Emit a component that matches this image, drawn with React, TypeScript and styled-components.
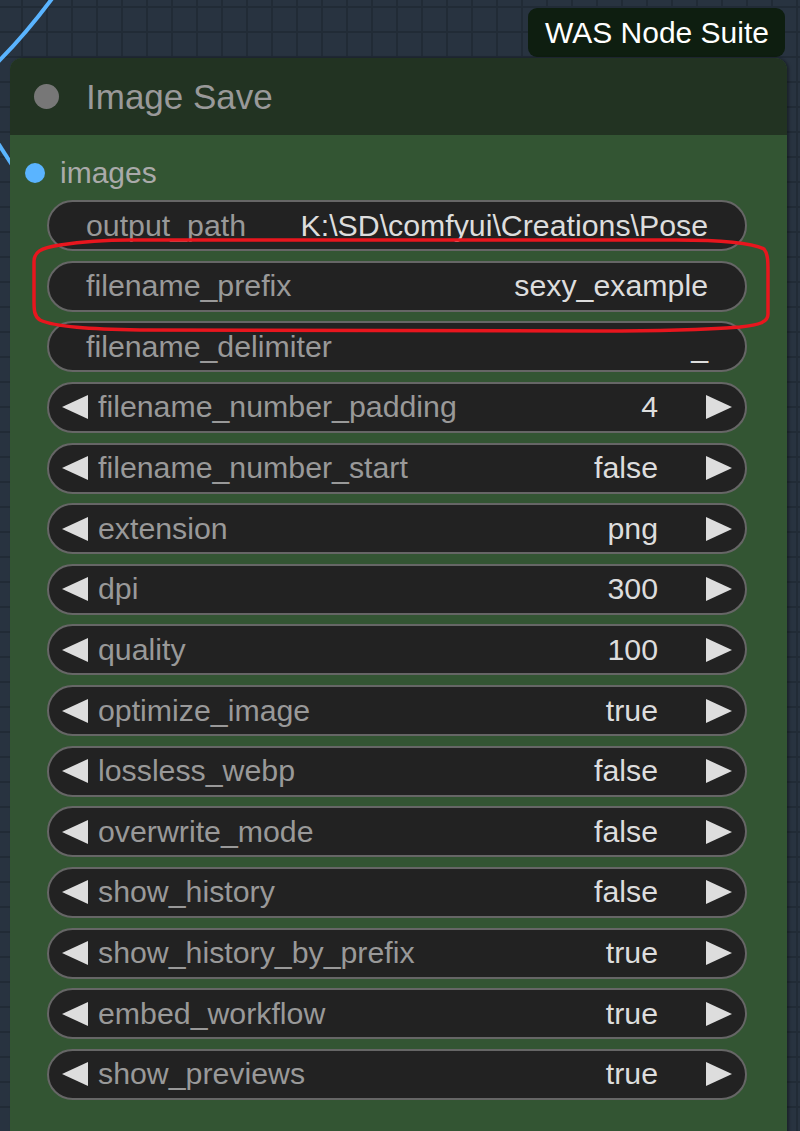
import React from 'react';
import styled, { createGlobalStyle } from 'styled-components';

const GlobalStyle = createGlobalStyle`
  html, body {
    margin: 0;
    padding: 0;
    background: #283340;
  }
  * {
    box-sizing: border-box;
  }
`;

interface IWidget {
  label: string;
  value: string;
  kind: 'text' | 'combo';
}

const widgets: IWidget[] = [
  { label: 'output_path', value: 'K:\\SD\\comfyui\\Creations\\Pose', kind: 'text' },
  { label: 'filename_prefix', value: 'sexy_example', kind: 'text' },
  { label: 'filename_delimiter', value: '_', kind: 'text' },
  { label: 'filename_number_padding', value: '4', kind: 'combo' },
  { label: 'filename_number_start', value: 'false', kind: 'combo' },
  { label: 'extension', value: 'png', kind: 'combo' },
  { label: 'dpi', value: '300', kind: 'combo' },
  { label: 'quality', value: '100', kind: 'combo' },
  { label: 'optimize_image', value: 'true', kind: 'combo' },
  { label: 'lossless_webp', value: 'false', kind: 'combo' },
  { label: 'overwrite_mode', value: 'false', kind: 'combo' },
  { label: 'show_history', value: 'false', kind: 'combo' },
  { label: 'show_history_by_prefix', value: 'true', kind: 'combo' },
  { label: 'embed_workflow', value: 'true', kind: 'combo' },
  { label: 'show_previews', value: 'true', kind: 'combo' },
];

const Arrow = ({ dir }: { dir: 'left' | 'right' }) => (
  <ArrowSvg width="26" height="24" viewBox="0 0 26 24">
    {dir === 'left' ? (
      <polygon points="26,0 26,24 0,12" fill="#dddddd" />
    ) : (
      <polygon points="0,0 0,24 26,12" fill="#dddddd" />
    )}
  </ArrowSvg>
);

const Widget = ({ label, value, kind }: IWidget) => (
  <WidgetRow kind={kind}>
    {kind === 'combo' && <Arrow dir="left" />}
    <Label kind={kind}>{label}</Label>
    <Value kind={kind}>{value}</Value>
    {kind === 'combo' && <Arrow dir="right" />}
  </WidgetRow>
);

export default function App() {
  return (
    <>
      <GlobalStyle />
      <Canvas>
        <Wires width="800" height="1131" viewBox="0 0 800 1131">
          <path d="M -4 64 Q 26 34 54 -4" stroke="#5ab4ff" strokeWidth="4" fill="none" />
          <path d="M -4 140 L 14 168" stroke="#5ab4ff" strokeWidth="4" fill="none" />
        </Wires>
        <BadgeRow>
          <Badge>WAS Node Suite</Badge>
        </BadgeRow>
        <Node>
          <Header>
            <StatusDot />
            <Title>Image Save</Title>
          </Header>
          <Body>
            <InputRow>
              <InputDot />
              <InputLabel>images</InputLabel>
            </InputRow>
            <WidgetList>
              {widgets.map((w) => (
                <Widget key={w.label} {...w} />
              ))}
            </WidgetList>
          </Body>
        </Node>
        <Marker width="800" height="1131" viewBox="0 0 800 1131">
          <path
            d="M 130 240 L 676 240 C 722 240 752 243 764 249 C 768 254 768 262 768 272 L 768 314 C 768 322 760 325 740 327 C 700 330 660 331 600 331 L 140 330 C 90 329 55 327 40 320 C 34 316 34 310 34 300 L 34 262 C 34 252 40 248 60 245 C 80 242 105 240 130 240 Z"
            stroke="#e8161e"
            strokeWidth="3.5"
            fill="none"
          />
        </Marker>
      </Canvas>
    </>
  );
}

const Canvas = styled.div`
  position: relative;
  width: 800px;
  height: 1131px;
  overflow: hidden;
  padding-top: 8px;
  font-family: 'Liberation Sans', Arial, sans-serif;
  background-color: #283340;
  background-image: linear-gradient(#212b36 2px, transparent 2px),
    linear-gradient(90deg, #212b36 2px, transparent 2px);
  background-size: 25px 25px;
  background-position: -4px 6px;
`;

const Wires = styled.svg`
  position: absolute;
  left: 0;
  top: 0;
  pointer-events: none;
`;

const Marker = styled.svg`
  position: absolute;
  left: 0;
  top: 0;
  pointer-events: none;
`;

const BadgeRow = styled.div`
  position: relative;
  display: flex;
  justify-content: flex-end;
  padding-right: 15px;
`;

const Badge = styled.div`
  height: 49px;
  padding: 0 16px 0 17px;
  display: flex;
  align-items: center;
  border-radius: 9px;
  background: #0e1e10;
  color: #ffffff;
  font-size: 30px;
  line-height: 1.2;
`;

const Node = styled.div`
  position: relative;
  margin-top: 1px;
  margin-left: 10px;
  width: 777px;
  height: 1080px;
  border-radius: 12px 12px 0 0;
  background: #335533;
  box-shadow: 2px 0 3px rgba(0, 0, 0, 0.35);
  overflow: hidden;
`;

const Header = styled.div`
  height: 77px;
  display: flex;
  align-items: center;
  background: #223322;
  padding-left: 24px;
`;

const StatusDot = styled.div`
  width: 25px;
  height: 25px;
  border-radius: 50%;
  background: #777777;
  margin-right: 27px;
`;

const Title = styled.div`
  color: #999999;
  font-size: 35px;
  line-height: 1.2;
`;

const Body = styled.div`
  padding-top: 10px;
`;

const InputRow = styled.div`
  height: 55px;
  display: flex;
  align-items: center;
  padding-left: 15px;
`;

const InputDot = styled.div`
  width: 20px;
  height: 20px;
  border-radius: 50%;
  background: #5ab4ff;
  margin-right: 15px;
`;

const InputLabel = styled.div`
  color: #aaaaaa;
  font-size: 30px;
  line-height: 1.2;
`;

const WidgetList = styled.div`
  display: flex;
  flex-direction: column;
  gap: 9.64px;
  margin-left: 37px;
  width: 700px;
`;

const WidgetRow = styled.div<{ kind: 'text' | 'combo' }>`
  height: 51px;
  display: flex;
  align-items: center;
  background: #222222;
  border: 2px solid #666666;
  border-radius: 26px;
  padding: ${({ kind }) => (kind === 'combo' ? '0 13px' : '0 37px')};
  font-size: 30.3px;
  line-height: 1.25;
  white-space: nowrap;
`;

const ArrowSvg = styled.svg`
  flex: none;
  display: block;
`;

const Label = styled.span<{ kind: 'text' | 'combo' }>`
  flex: none;
  color: #999999;
  margin-left: ${({ kind }) => (kind === 'combo' ? '10px' : '0')};
`;

const Value = styled.span<{ kind: 'text' | 'combo' }>`
  flex: 1;
  min-width: 0;
  text-align: right;
  color: #dddddd;
  margin-left: 20px;
  margin-right: ${({ kind }) => (kind === 'combo' ? '48px' : '0')};
`;
